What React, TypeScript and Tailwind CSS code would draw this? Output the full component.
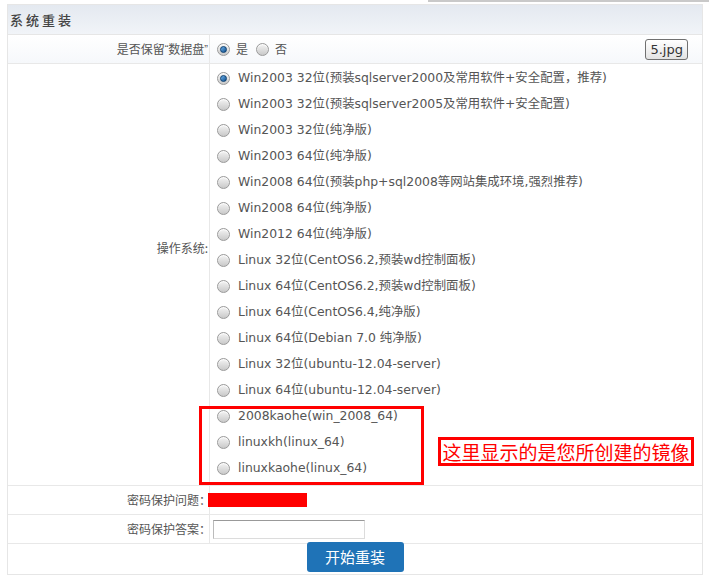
import React from 'react';

const OS_LIST = [
  'Win2003 32位(预装sqlserver2000及常用软件+安全配置，推荐)',
  'Win2003 32位(预装sqlserver2005及常用软件+安全配置)',
  'Win2003 32位(纯净版)',
  'Win2003 64位(纯净版)',
  'Win2008 64位(预装php+sql2008等网站集成环境,强烈推荐)',
  'Win2008 64位(纯净版)',
  'Win2012 64位(纯净版)',
  'Linux 32位(CentOS6.2,预装wd控制面板)',
  'Linux 64位(CentOS6.2,预装wd控制面板)',
  'Linux 64位(CentOS6.4,纯净版)',
  'Linux 64位(Debian 7.0 纯净版)',
  'Linux 32位(ubuntu-12.04-server)',
  'Linux 64位(ubuntu-12.04-server)',
  '2008kaohe(win_2008_64)',
  'linuxkh(linux_64)',
  'linuxkaohe(linux_64)',
];

const CJK = { fontFamily: '"Noto Sans CJK SC", sans-serif' };

// little grey radio knob, blue dot when picked
function Radio({ checked }: { checked?: boolean }) {
  return (
    <span className="flex h-[13px] w-[13px] shrink-0 items-center justify-center rounded-full border border-[#9a9a9a] bg-gradient-to-b from-[#f4f4f4] to-[#c9c9c9] shadow-[inset_0_1px_1px_rgba(255,255,255,0.9)]">
      {checked && (
        <span className="h-[7px] w-[7px] rounded-full border border-[#0a3e70] bg-gradient-to-br from-[#6fb4ee] to-[#0b4f8c]" />
      )}
    </span>
  );
}

export default function App() {
  return (
    <div
      className="relative h-[588px] w-[709px] bg-white text-[12px] text-[#555]"
      style={{ fontFamily: '"DejaVu Sans", "Noto Sans CJK SC", sans-serif' }}
    >
      {/* thin grey rule peeking in above the panel */}
      <div className="ml-[428px] h-[2px] bg-[#c9c9c9]" />

      <div className="mx-[7px] mt-[2px] w-[696px] border border-[#e6e6e6]">
        {/* header */}
        <div
          className="flex h-[30px] items-center border-b border-[#e6e6e6] bg-gradient-to-b from-[#e4e9f0] to-[#f1f4f8] pl-[2px] text-[13px] font-medium tracking-[3px] text-[#444]"
          style={CJK}
        >
          系统重装
        </div>

        {/* keep data disk */}
        <div className="grid h-[29px] grid-cols-[202px_1fr] border-b border-[#e8e8e8] bg-gradient-to-b from-white to-[#f6f8fb]">
          <div className="flex items-center justify-end border-r border-[#e8e8e8] pr-[1px]">
            <span style={CJK}>是否保留</span>
            <span className="text-[11px]" style={{ fontFamily: '"Liberation Sans", sans-serif' }}>“</span>
            <span style={CJK}>数据盘</span>
            <span className="text-[11px]" style={{ fontFamily: '"Liberation Sans", sans-serif' }}>”</span>
          </div>
          <div className="flex items-center pl-[7px] pr-[14px]">
            <Radio checked />
            <span className="ml-[6px] mr-[8px]" style={CJK}>是</span>
            <Radio />
            <span className="ml-[6px]" style={CJK}>否</span>
            <button className="ml-auto h-[21px] rounded-[3px] border border-[#707070] bg-gradient-to-b from-white to-[#e3e3e3] px-[4px] text-[13px] text-[#333]">
              5.jpg
            </button>
          </div>
        </div>

        {/* operating systems */}
        <div className="grid h-[422px] grid-cols-[202px_1fr] border-b border-[#e8e8e8]">
          <div className="flex justify-end border-r border-[#e8e8e8] pr-[1px] pt-[175px]" style={CJK}>
            操作系统:
          </div>
          <div className="flex flex-col pl-[7px] pt-[1px] text-[12.4px]">
            {OS_LIST.map((os, i) => (
              <label key={os} className="flex h-[26px] items-center gap-[8px]">
                <Radio checked={i === 0} />
                <span>{os}</span>
              </label>
            ))}
          </div>
        </div>

        {/* security question */}
        <div className="grid h-[29px] grid-cols-[202px_1fr] border-b border-[#e8e8e8]">
          <div className="flex items-center justify-end border-r border-[#e8e8e8]">
            <span className="-mr-[2px]" style={CJK}>密码保护问题：</span>
          </div>
          <div className="flex items-center">
            <span className="-ml-[2px] h-[14px] w-[99px] bg-[#ff0000]" />
          </div>
        </div>

        {/* security answer */}
        <div className="grid h-[29px] grid-cols-[202px_1fr] border-b border-[#e8e8e8]">
          <div className="flex items-center justify-end border-r border-[#e8e8e8]">
            <span className="-mr-[2px]" style={CJK}>密码保护答案：</span>
          </div>
          <div className="flex items-center pl-[3px]">
            <input className="h-[19px] w-[152px] border border-[#dcdcdc] border-l-[#bbb] border-t-[#999] outline-none" />
          </div>
        </div>

        {/* submit */}
        <div className="flex h-[30px] items-start justify-center">
          <button className="mt-[-2px] h-[30px] w-[97px] rounded-[3px] bg-[#1f73b7] text-[15px] text-white" style={CJK}>
            开始重装
          </button>
        </div>
      </div>

      {/* annotation boxes */}
      <div className="absolute left-[199px] top-[406px] h-[79px] w-[225px] border-[3px] border-[#ff0000]" />
      <div
        className="absolute left-[438px] top-[437px] flex h-[29px] w-[256px] items-center justify-center border-[3px] border-[#ff0000] text-[19px] leading-none text-[#ff0000]"
        style={CJK}
      >
        这里显示的是您所创建的镜像
      </div>
    </div>
  );
}
